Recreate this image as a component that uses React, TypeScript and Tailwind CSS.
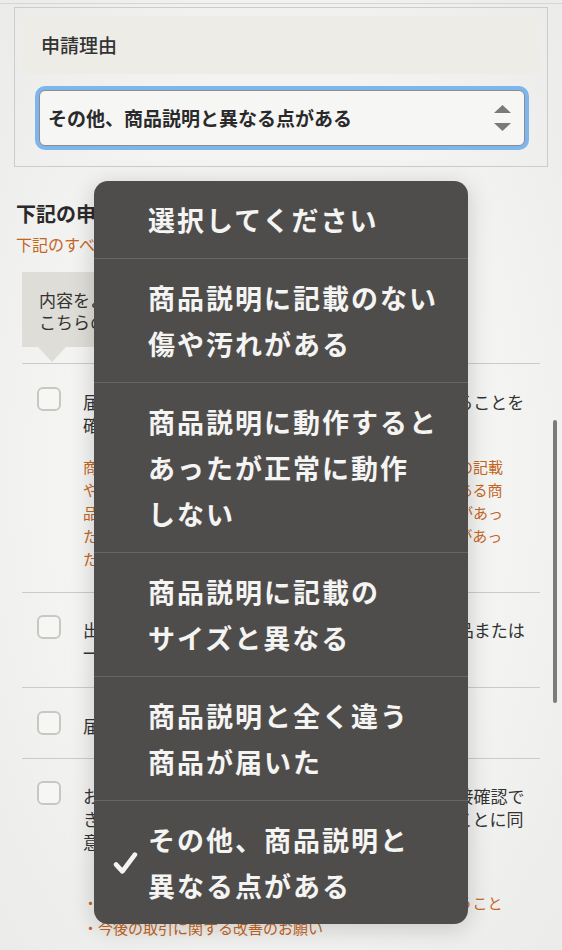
import React from "react";

const jp = { fontFamily: '"Noto Sans CJK JP", "Noto Sans", sans-serif' };

const options: { lines: string[]; selected?: boolean }[] = [
  { lines: ["選択してください"] },
  { lines: ["商品説明に記載のない", "傷や汚れがある"] },
  { lines: ["商品説明に動作すると", "あったが正常に動作", "しない"] },
  { lines: ["商品説明に記載の", "サイズと異なる"] },
  { lines: ["商品説明と全く違う", "商品が届いた"] },
  { lines: ["その他、商品説明と", "異なる点がある"], selected: true },
];

function Checkbox() {
  return (
    <div className="h-[24px] w-[24px] shrink-0 rounded-[6px] border-2 border-[#c9c7c1] bg-[#f6f6f5]" />
  );
}

function Row({
  lines,
  notes,
  pt,
  pb,
  notesMt = 19,
  notesLh = 23,
}: {
  lines: string[];
  notes?: string[];
  pt: string;
  pb: string;
  notesMt?: number;
  notesLh?: number;
}) {
  return (
    <div className={`flex items-start gap-[22px] border-t border-[#cccbc6] pl-[15px] pr-[14px] ${pt} ${pb}`}>
      <Checkbox />
      <div className="mt-[3px] flex-1">
        <div className="text-[17px] leading-[23px] text-[#333]">
          {lines.map((l) => (
            <div key={l} className="whitespace-nowrap">
              {l}
            </div>
          ))}
        </div>
        {notes && (
          <div
            className="text-[15px] text-[#c4661e]"
            style={{ marginTop: notesMt, lineHeight: `${notesLh}px` }}
          >
            {notes.map((l) => (
              <div key={l} className="whitespace-nowrap">
                {l}
              </div>
            ))}
          </div>
        )}
      </div>
    </div>
  );
}

export default function App() {
  return (
    <div
      className="relative h-[950px] w-full overflow-hidden bg-[radial-gradient(ellipse_at_center,#f8f8f7_0%,#f3f3f2_60%,#ebebea_100%)]"
      style={jp}
    >
      {/* page */}
      <div className="pt-[3px]">
        <div className="border-t border-[#d6d6d4] pt-[3px]">
          <div className="mx-[14px] border border-[#cdccc8] px-[7px] pb-[16px] pt-[8px]">
            <div className="flex h-[58px] items-center bg-[#edece6] pl-[19px] text-[19px] font-medium text-[#333]">
              申請理由
            </div>
            <div className="ml-[13px] mr-[11px] mt-[12px] rounded-[10px] bg-[#7db5ef] p-[4px]">
              <div className="flex h-[56px] items-center justify-between rounded-[6px] border border-[#8d8c89] bg-[#f6f6f5] pl-[8px] pr-[13px]">
                <span className="text-[19px] font-bold text-[#2a2a2a]">
                  その他、商品説明と異なる点がある
                </span>
                <svg width="17" height="27" viewBox="0 0 17 27">
                  <path d="M8.5 0 L17 8 L0 8 Z" fill="#7a7a77" />
                  <path d="M0 18 L17 18 L8.5 26 Z" fill="#7a7a77" />
                </svg>
              </div>
            </div>
          </div>
        </div>

        <div className="px-[16px]">
          <h2 className="mt-[33px] text-[20px] font-bold leading-[28px] text-[#2a2a2a]">
            下記の申請内容をご確認ください
          </h2>
          <p className="mt-[5px] text-[16px] leading-[22px] text-[#c4661e]">
            下記のすべての項目にチェックを入れてください
          </p>

          <div className="mx-[6px] mt-[17px]">
            <div className="relative w-fit bg-[#dfddd7] px-[17px] pb-[14px] pt-[17px] text-[17px] leading-[22px] text-[#333]">
              <div>内容をよくご確認のうえ、</div>
              <div>こちらの項目にチェックしてください</div>
              <div className="absolute left-[16px] top-full h-0 w-0 border-l-[14px] border-r-[14px] border-t-[15px] border-l-transparent border-r-transparent border-t-[#dfddd7]" />
            </div>
            <div className="mt-[16px]">
              <Row
                pt="pt-[23px]"
                pb="pb-[22px]"
                lines={["届いた商品の状態が商品説明と明確に異なっていることを", "確認しました"]}
                notes={[
                  "商品説明に記載のない傷や汚れがある、または商品説明の記載",
                  "やサイズと異なる点、または商品説明と全く違う内容がある商",
                  "品が届いた、動作するとあったが正常に動作しない問題があっ",
                  "た場合は、取引画面から申請理由を選んで相談する必要があっ",
                  "た",
                ]}
              />
              <Row
                pt="pt-[22px]"
                pb="pb-[23px]"
                lines={["出品者と取引メッセージで十分に相談した上で返品または", "一部返金での解決ができないことを確認しました"]}
              />
              <Row pt="pt-[23px]" pb="pb-[21px]" lines={["届いた商品を受け取り評価をしていません"]} />
              <Row
                pt="pt-[22px]"
                pb="pb-[20px]"
                lines={[
                  "お問い合わせ内容について事務局から出品者に直接確認で",
                  "きる場合があること、および以下の内容を伝えることに同",
                  "意します",
                ]}
                notes={["・商品の状態が商品説明と異なる点についての確認を行うこと", "・今後の取引に関する改善のお願い"]}
                notesMt={37}
                notesLh={25}
              />
            </div>
          </div>
        </div>
      </div>

      {/* scrollbar */}
      <div className="absolute left-[553px] top-[420px] h-[283px] w-[4px] rounded-full bg-[#7b7b7b]" />

      {/* native picker popover */}
      <div className="absolute left-[94px] top-[181px] w-[374px] overflow-hidden rounded-[14px] bg-[#4f4d4b] shadow-[0_4px_24px_rgba(0,0,0,0.18)]">
        {options.map((o, i) => (
          <div
            key={i}
            className={`relative py-[15.5px] pl-[54px] pr-[16px] text-[27px] font-bold leading-[46px] tracking-[2px] text-[#f4f4f3] ${
              i > 0 ? "border-t border-[#686663]" : ""
            }`}
          >
            {o.lines.map((l) => (
              <div key={l} className="whitespace-nowrap">
                {l}
              </div>
            ))}
            {o.selected && (
              <svg
                className="absolute left-[19px] top-1/2 -translate-y-1/2"
                width="25"
                height="25"
                viewBox="0 0 24 24"
              >
                <path
                  d="M3 13.5 L9 20 L21 4"
                  fill="none"
                  stroke="#f4f4f3"
                  strokeWidth="4.5"
                  strokeLinecap="round"
                  strokeLinejoin="round"
                />
              </svg>
            )}
          </div>
        ))}
      </div>
    </div>
  );
}
